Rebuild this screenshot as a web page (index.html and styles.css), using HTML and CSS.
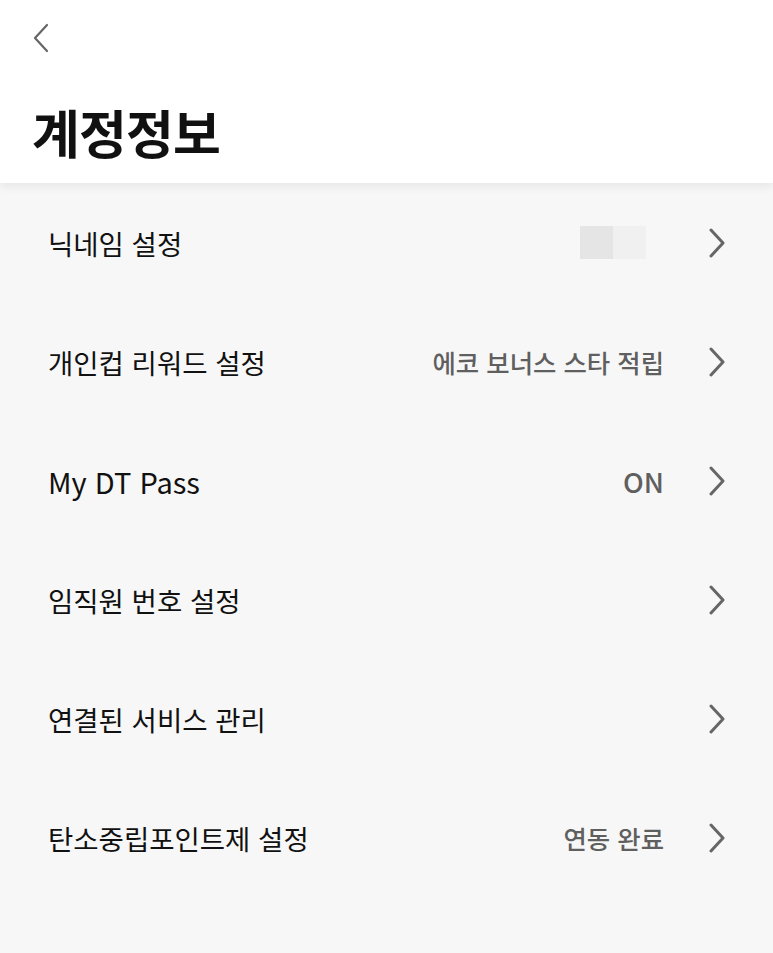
FILE: index.html
```html
<!DOCTYPE html>
<html lang="ko">
<head>
<meta charset="utf-8">
<link rel="stylesheet" href="styles.css">
</head>
<body>
<div class="page">
  <header class="header">
    <button class="back" aria-label="뒤로">
      <svg width="16" height="30" viewBox="0 0 16 30"><path d="M14 2 L2 15 L14 28" fill="none" stroke="#666" stroke-width="2.2" stroke-linecap="round" stroke-linejoin="round"/></svg>
    </button>
    <h1 class="title">계정정보</h1>
  </header>
  <ul class="list">
    <li class="row">
      <span class="label">닉네임 설정</span>
      <span class="value"><span class="blk dark"></span><span class="blk light"></span></span>
      <svg class="chev" width="16" height="30" viewBox="0 0 16 30"><path d="M2 2 L14 15 L2 28" fill="none" stroke="#666" stroke-width="3" stroke-linecap="round" stroke-linejoin="round"/></svg>
    </li>
    <li class="row">
      <span class="label">개인컵 리워드 설정</span>
      <span class="value">에코 보너스 스타 적립</span>
      <svg class="chev" width="16" height="30" viewBox="0 0 16 30"><path d="M2 2 L14 15 L2 28" fill="none" stroke="#666" stroke-width="3" stroke-linecap="round" stroke-linejoin="round"/></svg>
    </li>
    <li class="row">
      <span class="label latin">My DT Pass</span>
      <span class="value latin">ON</span>
      <svg class="chev" width="16" height="30" viewBox="0 0 16 30"><path d="M2 2 L14 15 L2 28" fill="none" stroke="#666" stroke-width="3" stroke-linecap="round" stroke-linejoin="round"/></svg>
    </li>
    <li class="row">
      <span class="label">임직원 번호 설정</span>
      <span class="value"></span>
      <svg class="chev" width="16" height="30" viewBox="0 0 16 30"><path d="M2 2 L14 15 L2 28" fill="none" stroke="#666" stroke-width="3" stroke-linecap="round" stroke-linejoin="round"/></svg>
    </li>
    <li class="row">
      <span class="label">연결된 서비스 관리</span>
      <span class="value"></span>
      <svg class="chev" width="16" height="30" viewBox="0 0 16 30"><path d="M2 2 L14 15 L2 28" fill="none" stroke="#666" stroke-width="3" stroke-linecap="round" stroke-linejoin="round"/></svg>
    </li>
    <li class="row">
      <span class="label">탄소중립포인트제 설정</span>
      <span class="value">연동 완료</span>
      <svg class="chev" width="16" height="30" viewBox="0 0 16 30"><path d="M2 2 L14 15 L2 28" fill="none" stroke="#666" stroke-width="3" stroke-linecap="round" stroke-linejoin="round"/></svg>
    </li>
  </ul>
</div>
</body>
</html>
```

FILE: styles.css
```css
* { box-sizing: border-box; }
html, body {
  margin: 0;
  padding: 0;
  height: 100%;
  background: #f7f7f7;
}
body {
  font-family: "Noto Sans CJK KR", "Noto Sans", sans-serif;
  color: #111;
}
.page {
  width: 773px;
  min-height: 953px;
  background: #f7f7f7;
}
.header {
  position: relative;
  z-index: 1;
  background: #fff;
  height: 183px;
  padding: 23px 0 0 33px;
  box-shadow: 0 3px 10px rgba(0,0,0,0.08);
}
.back {
  display: block;
  border: 0;
  background: none;
  padding: 0;
  width: 16px;
  height: 30px;
}
.back svg { display: block; }
.title {
  margin: 47px 0 0 -1px;
  font-size: 52px;
  font-weight: 700;
  line-height: 64px;
  letter-spacing: -0.8px;
  color: #111;
}
.list {
  list-style: none;
  margin: 0;
  padding: 0;
}
.row {
  display: flex;
  align-items: center;
  height: 119px;
  padding: 0 48px 0 48px;
}
.label {
  flex: 1;
  font-size: 27.5px;
  font-weight: 400;
  color: #111;
}
.label.latin { font-size: 29px; }
.value {
  display: flex;
  align-items: center;
  font-size: 25.4px;
  font-weight: 500;
  color: #5f5f5f;
  margin-right: 45px;
}
.value.latin { font-size: 27.5px; font-weight: 500; }
.blk {
  display: block;
  width: 33px;
  height: 33px;
}
.blk.dark { background: #e5e5e5; }
.blk.light { background: #f0f0f0; margin-right: 18px; }
.chev { display: block; flex: none; }
```
